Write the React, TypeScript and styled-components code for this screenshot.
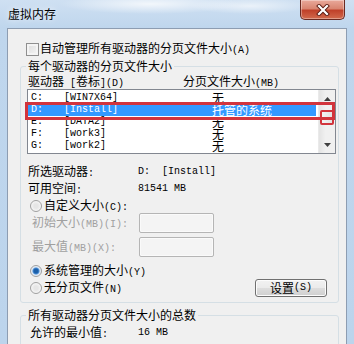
import React from 'react';
import styled, { createGlobalStyle } from 'styled-components';

const cjk = `"Noto Sans CJK SC", "Noto Sans", sans-serif`;
const mono = `"Liberation Mono", "Noto Sans CJK SC", monospace`;

const Global = createGlobalStyle`
  html, body { margin: 0; padding: 0; }
  body {
    width: 354px; height: 344px; overflow: hidden;
    background: #bcd3ea;
    font-family: ${cjk};
    font-size: 12px;
    color: #000;
  }
  * { box-sizing: border-box; }
`;

const Window = styled.div`
  width: 354px;
  height: 344px;
  overflow: hidden;
  display: flex;
  flex-direction: column;
  padding: 0 7px;
  background:
    radial-gradient(ellipse 90px 10px at 150px 4px, rgba(255,255,255,0.75), rgba(255,255,255,0) 100%),
    radial-gradient(ellipse 60px 8px at 250px 6px, rgba(255,255,255,0.6), rgba(255,255,255,0) 100%),
    linear-gradient(180deg, #cfe0f2 0px, #bfd6ed 28px, #bcd4ec 100%);
`;

const TitleBar = styled.div`
  height: 28px;
  flex: none;
  display: flex;
  align-items: flex-start;
  justify-content: space-between;
`;

const Title = styled.div`
  padding: 7px 0 0 1px;
  font-size: 12px;
  line-height: 14px;
  color: #000;
  text-shadow: 0 0 6px rgba(255,255,255,0.9);
`;

const CloseButton = styled.div`
  width: 45px;
  height: 20px;
  margin-right: 2px;
  border: 1px solid #6a2a22;
  border-top: none;
  border-radius: 0 0 5px 5px;
  background: linear-gradient(180deg, #e9a99b 0%, #d98571 45%, #c0412a 55%, #d26a4d 100%);
  box-shadow: inset 0 0 0 1px rgba(255,255,255,0.35);
  display: flex;
  align-items: center;
  justify-content: center;
`;

const Client = styled.div`
  flex: 1;
  background: #f0f0f0;
  border: 1px solid #8d9db2;
  border-bottom: none;
  padding: 13px 0 0 12px;
  display: flex;
  flex-direction: column;
`;

const Ascii = styled.span`
  font-family: ${mono};
  font-size: 10px;
  white-space: pre;
`;

const Mixed = ({ t }: { t: string }) => (
  <>
    {t.split(/([\x20-\x7e]+)/).map((s, i) =>
      /^[\x20-\x7e]+$/.test(s) ? <Ascii key={i}>{s}</Ascii> : s ? <span key={i}>{s}</span> : null
    )}
  </>
);

const CheckRow = styled.div`
  display: flex;
  align-items: center;
  height: 14px;
  margin-left: 6px;
  gap: 1px;
  line-height: 14px;
`;

const CheckBox = styled.span`
  width: 13px;
  height: 13px;
  border: 1px solid #8f8f8f;
  background: linear-gradient(135deg, #dcdcdc 0%, #f6f6f6 100%);
  box-shadow: inset 0 0 0 2px #f4f4f4;
  flex: none;
`;

const Group = styled.fieldset<{ $mt: number }>`
  margin: ${p => p.$mt}px 0 0 0;
  padding: 0;
  width: 319px;
  border: 1px solid #d5dfe5;
  border-radius: 3px;
  min-width: 0;
`;

const Legend = styled.legend`
  margin-left: 5px;
  padding: 0 2px;
  font-size: 12px;
  line-height: 14px;
`;

const GroupBody = styled.div<{ $pb: number }>`
  display: flex;
  flex-direction: column;
  padding: 0 0 ${p => p.$pb}px 0;
`;

const HeaderRow = styled.div`
  display: flex;
  margin: 1px 0 0 7px;
  height: 14px;
  line-height: 14px;
`;

const HeaderCell = styled.span<{ $w?: number }>`
  width: ${p => (p.$w ? `${p.$w}px` : 'auto')};
  white-space: pre;
`;

const List = styled.div`
  position: relative;
  margin: 1px 0 0 6px;
  width: 309px;
  height: 65px;
  border: 1px solid #828790;
  background: #fff;
  display: flex;
`;

const Rows = styled.div`
  flex: 1;
  padding-top: 2px;
  display: flex;
  flex-direction: column;
`;

const Row = styled.div<{ $sel?: boolean }>`
  display: flex;
  align-items: center;
  height: 12px;
  margin-right: 2px;
  padding-left: 3px;
  background: ${p => (p.$sel ? '#3399ff' : 'transparent')};
  color: ${p => (p.$sel ? '#fff' : '#000')};
`;

const Cell = styled.span<{ $w?: number; $cjk?: boolean }>`
  width: ${p => (p.$w ? `${p.$w}px` : 'auto')};
  white-space: pre;
  line-height: 12px;
  height: 12px;
  overflow: visible;
  font-family: ${p => (p.$cjk ? cjk : mono)};
  font-size: ${p => (p.$cjk ? '12px' : '10px')};
`;

const ScrollBar = styled.div`
  width: 17px;
  flex: none;
  display: flex;
  flex-direction: column;
  background: linear-gradient(90deg, #e3e3e3, #f0f0f0 40%, #f0f0f0);
  border-left: 1px solid #eaeaea;
`;

const ScrollArrow = styled.div`
  height: 17px;
  display: flex;
  align-items: center;
  justify-content: center;
`;

const ScrollTrack = styled.div`
  flex: 1;
  padding: 3px 1px 0 1px;
`;

const Thumb = styled.div`
  height: 15px;
  border: 2px solid #d2343c;
  border-radius: 2px;
  background: linear-gradient(90deg, #f3f3f3, #e2e2e2);
`;

const Highlight = styled.div`
  position: absolute;
  left: -3px;
  top: 12px;
  width: 310px;
  height: 18px;
  border: 3px solid #d2343c;
  pointer-events: none;
`;

const InfoRow = styled.div<{ $mt: number; $ml?: number }>`
  display: flex;
  align-items: center;
  height: 14px;
  line-height: 14px;
  margin: ${p => p.$mt}px 0 0 ${p => p.$ml ?? 7}px;
`;

const InfoLabel = styled.span<{ $w: number }>`
  width: ${p => p.$w}px;
  white-space: pre;
`;

const MonoValue = styled.span`
  font-family: ${mono};
  font-size: 10px;
  white-space: pre;
`;

const RadioRow = styled.div<{ $mt: number }>`
  display: flex;
  align-items: center;
  height: 14px;
  line-height: 14px;
  margin: ${p => p.$mt}px 0 0 9px;
  gap: 2px;
`;

const Radio = styled.span<{ $on?: boolean }>`
  width: 12px;
  height: 12px;
  border-radius: 50%;
  border: 1px solid #a0a0a0;
  flex: none;
  background: ${p =>
    p.$on
      ? 'radial-gradient(circle, #1c5fa8 0 2px, #4a8ed6 3px, #dfe9f5 4px, #f4f4f4 6px)'
      : 'radial-gradient(circle, #e6e6e6 0 2px, #f6f6f6 5px)'};
`;

const FieldRow = styled.div<{ $mt: number }>`
  display: flex;
  align-items: center;
  height: 20px;
  margin: ${p => p.$mt}px 0 0 11px;
`;

const FieldLabel = styled.span`
  width: 107px;
  color: #a0a0a0;
  white-space: pre;
  line-height: 14px;
`;

const TextBox = styled.div`
  width: 75px;
  height: 20px;
  border: 1px solid #b5b5b5;
  border-radius: 2px;
  background: #f4f4f4;
  box-shadow: inset 0 0 0 1px #fafafa;
`;

const BottomRow = styled.div`
  display: flex;
  align-items: center;
  justify-content: space-between;
  height: 18px;
  margin: 1px 11px 0 9px;
`;

const RadioLabel = styled.div`
  display: flex;
  align-items: center;
  gap: 2px;
  line-height: 14px;
`;

const Button = styled.div`
  width: 72px;
  height: 18px;
  border: 1px solid #707070;
  border-radius: 3px;
  background: linear-gradient(180deg, #f2f2f2 0%, #ebebeb 48%, #dddddd 52%, #cfcfcf 100%);
  box-shadow: inset 0 0 0 1px #fcfcfc;
  display: flex;
  align-items: center;
  justify-content: center;
  line-height: 14px;
`;

const drives: [string, string, string][] = [
  ['C:', '[WIN7X64]', '无'],
  ['D:', '[Install]', '托管的系统'],
  ['E:', '[DATA2]', '无'],
  ['F:', '[work3]', '无'],
  ['G:', '[work2]', '无'],
];

export default function App() {
  return (
    <>
      <Global />
      <Window>
        <TitleBar>
          <Title>虚拟内存</Title>
          <CloseButton>
            <svg width="14" height="12" viewBox="0 0 14 12">
              <path d="M3 2 L11 10 M11 2 L3 10" stroke="#5a1a12" strokeWidth="4" strokeLinecap="square" />
              <path d="M3 2 L11 10 M11 2 L3 10" stroke="#fff" strokeWidth="2.2" strokeLinecap="square" />
            </svg>
          </CloseButton>
        </TitleBar>
        <Client>
          <CheckRow>
            <CheckBox />
            <span><Mixed t="自动管理所有驱动器的分页文件大小(A)" /></span>
          </CheckRow>
          <Group $mt={3}>
            <Legend>每个驱动器的分页文件大小</Legend>
            <GroupBody $pb={5}>
              <HeaderRow>
                <HeaderCell $w={155}><Mixed t="驱动器 [卷标](D)" /></HeaderCell>
                <HeaderCell><Mixed t="分页文件大小(MB)" /></HeaderCell>
              </HeaderRow>
              <List>
                <Rows>
                  {drives.map(([d, l, s]) => (
                    <Row key={d} $sel={d === 'D:'}>
                      <Cell $w={33}>{d}</Cell>
                      <Cell $w={148}>{l}</Cell>
                      <Cell $cjk>{s}</Cell>
                    </Row>
                  ))}
                </Rows>
                <ScrollBar>
                  <ScrollArrow>
                    <svg width="7" height="4" viewBox="0 0 7 4">
                      <path d="M0 4 L3.5 0 L7 4 Z" fill="#404040" />
                    </svg>
                  </ScrollArrow>
                  <ScrollTrack>
                    <Thumb />
                  </ScrollTrack>
                  <ScrollArrow>
                    <svg width="7" height="4" viewBox="0 0 7 4">
                      <path d="M0 0 L3.5 4 L7 0 Z" fill="#404040" />
                    </svg>
                  </ScrollArrow>
                </ScrollBar>
                <Highlight />
              </List>
              <InfoRow $mt={11}>
                <InfoLabel $w={110}><Mixed t="所选驱动器:" /></InfoLabel>
                <MonoValue>D:  [Install]</MonoValue>
              </InfoRow>
              <InfoRow $mt={3}>
                <InfoLabel $w={110}><Mixed t="可用空间:" /></InfoLabel>
                <MonoValue>81541 MB</MonoValue>
              </InfoRow>
              <RadioRow $mt={3}>
                <Radio />
                <span><Mixed t="自定义大小(C):" /></span>
              </RadioRow>
              <FieldRow $mt={0}>
                <FieldLabel><Mixed t="初始大小(MB)(I):" /></FieldLabel>
                <TextBox />
              </FieldRow>
              <FieldRow $mt={4}>
                <FieldLabel><Mixed t="最大值(MB)(X):" /></FieldLabel>
                <TextBox />
              </FieldRow>
              <RadioRow $mt={7}>
                <Radio $on />
                <span><Mixed t="系统管理的大小(Y)" /></span>
              </RadioRow>
              <BottomRow>
                <RadioLabel>
                  <Radio />
                  <span><Mixed t="无分页文件(N)" /></span>
                </RadioLabel>
                <Button><Mixed t="设置(S)" /></Button>
              </BottomRow>
            </GroupBody>
          </Group>
          <Group $mt={5}>
            <Legend>所有驱动器分页文件大小的总数</Legend>
            <GroupBody $pb={10}>
              <InfoRow $mt={4} $ml={9}>
                <InfoLabel $w={108}><Mixed t="允许的最小值:" /></InfoLabel>
                <MonoValue>16 MB</MonoValue>
              </InfoRow>
            </GroupBody>
          </Group>
        </Client>
      </Window>
    </>
  );
}
